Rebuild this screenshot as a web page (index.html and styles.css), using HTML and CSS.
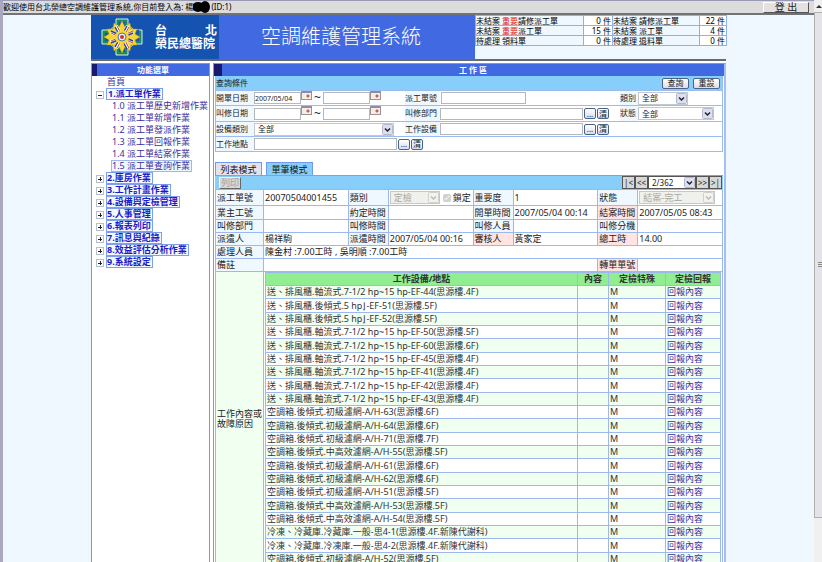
FILE: index.html
```html
<!DOCTYPE html>
<html lang="zh-Hant">
<head>
<meta charset="utf-8">
<title>空調維護管理系統</title>
<link rel="stylesheet" href="styles.css">
</head>
<body>
<div class="window">
  <div class="topbar">
    <p class="welcome">歡迎使用台北榮總空調維護管理系統,你目前登入為: 楊<svg class="redacted" width="18" height="12" viewBox="0 0 18 12" aria-hidden="true"><ellipse cx="5" cy="6" rx="6" ry="5"/><ellipse cx="12" cy="6" rx="5" ry="6"/></svg>(ID:1)</p>
    <button class="logout" type="button">登 出</button>
  </div>
  <div class="page">
    <header class="banner">
      <div class="brand">
        <svg class="emblem" viewBox="0 0 42 38" aria-hidden="true">
          <path d="M15 1h12v6l6 5h8v14h-8l-6 5v6H15v-6l-6-5H1V12h8l6-5z" fill="#1c8a5a" stroke="#d8efe0"/>
          <path d="M18 4h6v8h14v11H24v11h-6V23H4V15h14z" fill="#1553b0"/>
          <path d="M21 3l3 6 5-4 1 6 6 0-2 5 5 3-5 3 2 5-6 0-1 6-5-4-3 6-3-6-5 4-1-6-6 0 2-5-5-3 5-3-2-5 6 0 1-6 5 4z" fill="#f5d62c" stroke="#b99512" stroke-width=".5"/>
          <path d="M15 8l12 22M27 8L15 30M10 14l22 10M32 14L10 24" stroke="#fff" stroke-width="4"/>
          <path d="M14 9l12 22M26 8L14 29M10 13l22 10M32 15L10 25" stroke="#27409a" stroke-width="1.5"/>
          <path d="M16 8l12 22M28 9L16 30M10 15l22 10M32 13L10 23" stroke="#c23a3a" stroke-width="1"/>
          <circle cx="21" cy="19" r="7" fill="#f5d62c"/>
          <circle cx="21" cy="19" r="4" fill="#e8eef8" stroke="#4a78c0"/>
          <circle cx="21" cy="19" r="2" fill="#d83030"/>
        </svg>
        <div class="hospital"><span class="city"><span>台</span><span>北</span></span><span>榮民總醫院</span></div>
      </div>
      <h1>空調維護管理系統</h1>
      <div class="status">
        <table>
          <tr><th>未結案 <em>重要</em>請修派工單</th><td>0 件</td><th>未結案 請修派工單</th><td class="last">22 件</td></tr>
          <tr><th>未結案 <em>重要</em>派工單</th><td>15 件</td><th>未結案 派工單</th><td class="last">4 件</td></tr>
          <tr><th>待處理 領料單</th><td>0 件</td><th>待處理 退料單</th><td class="last">0 件</td></tr>
        </table>
      </div>
    </header>
    <div class="columns">
      <nav class="panel menu">
        <h2>功能選單</h2>
        <ul>
          <li><a href="#">首頁</a></li>
          <li class="group open"><a href="#">1.派工單作業</a>
            <ul>
              <li><a href="#">1.0 派工單歷史新增作業</a></li>
              <li><a href="#">1.1 派工單新增作業</a></li>
              <li><a href="#">1.2 派工單發派作業</a></li>
              <li><a href="#">1.3 派工單回報作業</a></li>
              <li><a href="#">1.4 派工單結案作業</a></li>
              <li><a class="current" href="#">1.5 派工單查詢作業</a></li>
            </ul>
          </li>
          <li class="group"><a href="#">2.庫房作業</a></li>
          <li class="group"><a href="#">3.工作計畫作業</a></li>
          <li class="group"><a href="#">4.設備與定檢管理</a></li>
          <li class="group"><a href="#">5.人事管理</a></li>
          <li class="group"><a href="#">6.報表列印</a></li>
          <li class="group"><a href="#">7.訊息與紀錄</a></li>
          <li class="group"><a href="#">8.效益評估分析作業</a></li>
          <li class="group"><a href="#">9.系統設定</a></li>
        </ul>
      </nav>
      <main class="panel work">
        <h2>工 作 區</h2>
        <form class="search">
          <div class="search-head"><span>查詢條件</span><button class="action" type="button">查詢</button><button class="action" type="button">重設</button></div>
          <div class="row">
            <label for="d1">開單日期</label>
            <div class="field"><input id="d1" class="date" value="2007/05/04"><button class="cal" type="button" aria-label="日曆"></button><span class="tilde">~</span><input class="date" aria-label="開單日期迄"><button class="cal" type="button" aria-label="日曆"></button></div>
            <label for="no">派工單號</label>
            <div class="field"><input id="no" class="short"></div>
            <label for="kind">類別</label>
            <div class="field"><select id="kind" class="small"><option>全部</option></select></div>
          </div>
          <div class="row">
            <label for="d2">叫修日期</label>
            <div class="field"><input id="d2" class="date"><button class="cal" type="button" aria-label="日曆"></button><span class="tilde">~</span><input class="date" aria-label="叫修日期迄"><button class="cal" type="button" aria-label="日曆"></button></div>
            <label for="dept">叫修部門</label>
            <div class="field"><input id="dept" class="long"><button class="mini" type="button">...</button><button class="mini" type="button">清</button></div>
            <label for="state">狀態</label>
            <div class="field"><select id="state" class="medium"><option>全部</option></select></div>
          </div>
          <div class="row">
            <label for="dev">設備類別</label>
            <div class="field"><select id="dev" class="wide"><option>全部</option></select></div>
            <label for="eq">工作設備</label>
            <div class="field"><input id="eq" class="long"><button class="mini" type="button">...</button><button class="mini" type="button">清</button></div>
          </div>
          <div class="row">
            <label for="place">工作地點</label>
            <div class="field place"><input id="place" class="long"><button class="mini" type="button">...</button><button class="mini" type="button">清</button></div>
          </div>
        </form>
        <div class="tabs"><button type="button">列表模式</button><button class="active" type="button">單筆模式</button></div>
        <div class="toolbar">
          <button class="print" type="button" disabled>列印</button>
          <div class="pager"><button type="button">|&lt;</button><button type="button">&lt;&lt;</button><select aria-label="頁次"><option>2/362</option></select><button type="button">&gt;&gt;</button><button type="button">&gt;|</button></div>
        </div>
        <table class="detail">
          <colgroup><col class="lab"><col><col class="lab2"><col><col class="lab2"><col><col class="lab2"><col></colgroup>
          <tr class="tall"><th>派工單號</th><td>20070504001455</td><th><label for="type">類別</label></th><td><div class="field"><select id="type" class="small" disabled><option>定檢</option></select><input id="lock" class="check" type="checkbox" checked disabled><label for="lock">鎖定</label></div></td><th>重要度</th><td>1</td><th><label for="st">狀態</label></th><td><select id="st" class="medium" disabled><option>結案-完工</option></select></td></tr>
          <tr><th>業主工號</th><td></td><th>約定時間</th><td></td><th>開單時間</th><td>2007/05/04 00:14</td><th class="pink">結案時間</th><td>2007/05/05 08:43</td></tr>
          <tr><th>叫修部門</th><td></td><th>叫修時間</th><td></td><th>叫修人員</th><td></td><th>叫修分機</th><td></td></tr>
          <tr><th>派遣人</th><td>楊祥駒</td><th>派遣時間</th><td>2007/05/04 00:16</td><th class="pink">審核人</th><td>黃家定</td><th class="pink">總工時</th><td>14.00</td></tr>
          <tr><th>處理人員</th><td colspan="7">陳金村 :7.00工時 , 吳明順 :7.00工時</td></tr>
          <tr><th>備註</th><td colspan="5"></td><th class="pink">轉單單號</th><td></td></tr>
          <tr><th class="reason">工作內容或故障原因</th><td class="holder" colspan="7">
            <table class="items">
              <colgroup><col><col class="c2"><col class="c3"><col class="c4"></colgroup>
              <thead><tr><th>工作設備/地點</th><th>內容</th><th>定檢特殊</th><th>定檢回報</th></tr></thead>
              <tbody>
              <tr><td>送、排風櫃.軸流式.7-1/2 hp~15 hp-EF-44(思源樓.4F)</td><td></td><td>M</td><td><a href="#">回報內容</a></td></tr>
              <tr><td>送、排風櫃.後傾式.5 hp⌋-EF-51(思源樓.5F)</td><td></td><td>M</td><td><a href="#">回報內容</a></td></tr>
              <tr><td>送、排風櫃.後傾式.5 hp⌋-EF-52(思源樓.5F)</td><td></td><td>M</td><td><a href="#">回報內容</a></td></tr>
              <tr><td>送、排風櫃.軸流式.7-1/2 hp~15 hp-EF-50(思源樓.5F)</td><td></td><td>M</td><td><a href="#">回報內容</a></td></tr>
              <tr><td>送、排風櫃.軸流式.7-1/2 hp~15 hp-EF-60(思源樓.6F)</td><td></td><td>M</td><td><a href="#">回報內容</a></td></tr>
              <tr><td>送、排風櫃.軸流式.7-1/2 hp~15 hp-EF-45(思源樓.4F)</td><td></td><td>M</td><td><a href="#">回報內容</a></td></tr>
              <tr><td>送、排風櫃.軸流式.7-1/2 hp~15 hp-EF-41(思源樓.4F)</td><td></td><td>M</td><td><a href="#">回報內容</a></td></tr>
              <tr><td>送、排風櫃.軸流式.7-1/2 hp~15 hp-EF-42(思源樓.4F)</td><td></td><td>M</td><td><a href="#">回報內容</a></td></tr>
              <tr><td>送、排風櫃.軸流式.7-1/2 hp~15 hp-EF-43(思源樓.4F)</td><td></td><td>M</td><td><a href="#">回報內容</a></td></tr>
              <tr><td>空調箱.後傾式.初級濾網-A/H-63(思源樓.6F)</td><td></td><td>M</td><td><a href="#">回報內容</a></td></tr>
              <tr><td>空調箱.後傾式.初級濾網-A/H-64(思源樓.6F)</td><td></td><td>M</td><td><a href="#">回報內容</a></td></tr>
              <tr><td>空調箱.後傾式.初級濾網-A/H-71(思源樓.7F)</td><td></td><td>M</td><td><a href="#">回報內容</a></td></tr>
              <tr><td>空調箱.後傾式.中高效濾網-A/H-55(思源樓.5F)</td><td></td><td>M</td><td><a href="#">回報內容</a></td></tr>
              <tr><td>空調箱.後傾式.初級濾網-A/H-61(思源樓.6F)</td><td></td><td>M</td><td><a href="#">回報內容</a></td></tr>
              <tr><td>空調箱.後傾式.初級濾網-A/H-62(思源樓.6F)</td><td></td><td>M</td><td><a href="#">回報內容</a></td></tr>
              <tr><td>空調箱.後傾式.初級濾網-A/H-51(思源樓.5F)</td><td></td><td>M</td><td><a href="#">回報內容</a></td></tr>
              <tr><td>空調箱.後傾式.中高效濾網-A/H-53(思源樓.5F)</td><td></td><td>M</td><td><a href="#">回報內容</a></td></tr>
              <tr><td>空調箱.後傾式.中高效濾網-A/H-54(思源樓.5F)</td><td></td><td>M</td><td><a href="#">回報內容</a></td></tr>
              <tr><td>冷凍、冷藏庫.冷藏庫.一般-思4-1(思源樓.4F.新陳代謝科)</td><td></td><td>M</td><td><a href="#">回報內容</a></td></tr>
              <tr><td>冷凍、冷藏庫.冷凍庫.一般-思4-2(思源樓.4F.新陳代謝科)</td><td></td><td>M</td><td><a href="#">回報內容</a></td></tr>
              <tr><td>空調箱.後傾式.初級濾網-A/H-52(思源樓.5F)</td><td></td><td>M</td><td><a href="#">回報內容</a></td></tr>
              </tbody>
            </table>
          </td></tr>
        </table>
      </main>
    </div>
  </div>
</div>
<div class="rail" aria-hidden="true"><svg width="8" height="12" viewBox="0 0 8 12"><path d="M2 8l3-3 3 3z" fill="#333"/></svg><div class="thumb"><i></i><i></i><i></i></div></div>
</body>
</html>
```

FILE: styles.css
```css
* { box-sizing: border-box; }

body {
  margin: 0;
  height: 100vh;
  overflow: hidden;
  display: flex;
  background: #f0f8ff;
  color: #222;
  font: 9px/10px "Noto Sans", "Noto Sans CJK TC", sans-serif;
}

button, input, select { font: inherit; color: inherit; margin: 0; padding: 0; border-radius: 0; }
h1, h2, p, ul { margin: 0; padding: 0; }
ul { list-style: none; }
a { color: #3a2f9c; text-decoration: none; }
table { border-collapse: collapse; border-spacing: 0; }
th { font-weight: 400; text-align: left; }

.window {
  flex: 1;
  min-width: 0;
  overflow: hidden;
  border-left: 3px solid #a8a8c0;
  border-top: 1px solid #9a9ab4;
}

.topbar {
  display: flex;
  justify-content: space-between;
  align-items: center;
  height: 14px;
  padding-right: 5px;
  background: #dcdcdc;
  border-bottom: 2px solid #707478;
}
.welcome { display: flex; align-items: center; font-size: 8px; line-height: 12px; color: #000; white-space: pre; }
.logout {
  width: 46px;
  height: 11px;
  border: 1px solid;
  border-color: #fff #555 #555 #fff;
  background: #e4e2e0;
  font-size: 10px;
  line-height: 9px;
}

.page { width: 100%; max-width: 635px; margin: 0 auto; }

.banner {
  display: flex;
  height: 46px;
  border-bottom: 2px solid #666c74;
  background: #4169e1;
}
.brand { display: flex; align-items: center; width: 128px; padding-left: 10px; gap: 12px; background: #1553b0; }
.emblem { width: 42px; height: 40px; }
.hospital { display: flex; flex-direction: column; width: 62px; color: #fff; font-size: 12px; line-height: 13px; font-weight: 700; white-space: nowrap; }
.city { display: flex; justify-content: space-between; }
.banner h1 { flex: 1; padding-left: 42px; color: #fff; font-size: 20px; line-height: 44px; font-weight: 300; white-space: nowrap; }
.status { width: 251px; background: #f0f8ff; color: #000; font-size: 8px; line-height: 8px; }
.status table { width: 100%; table-layout: fixed; }
.status th, .status td { height: 10px; padding: 0; border: 1px solid #8fb0ee; white-space: nowrap; }
.status th { width: 108px; }
.status th ~ th { width: 87px; }
.status td { width: 29px; padding-right: 1px; text-align: right; background: #fff; }
.status .last { width: 27px; }
.status em { font-style: normal; color: #e02020; }

.columns { display: flex; align-items: flex-start; gap: 3px; padding-top: 2px; background: #fff; }
.panel { background: #fff; border: 1px solid #6f9af0; }
.panel h2 {
  height: 12px;
  border-left: 5px solid #191970;
  background: #4169e1;
  color: #fff;
  font-size: 8px;
  line-height: 12px;
  font-weight: 700;
  text-align: center;
}

.menu { width: 119px; height: 100vh; }
.menu ul { padding: 0 0 0 14px; }
.menu li { line-height: 12px; white-space: nowrap; }
.menu li a { display: inline-block; height: 12px; line-height: 10px; padding: 0 1px; border: 1px solid transparent; vertical-align: top; }
.menu li > a:first-child:last-child { padding-left: 0; }
.menu li ul { padding: 0 0 0 5px; }
.menu .current { border-color: #9cb8ec; background: #f0f8ff; }
.group { position: relative; }
.menu .group > a { border-color: #7d9ff0; background: #f4f8ff; color: #1a1ac8; font-weight: 700; }
.group::before {
  content: "";
  position: absolute;
  left: -10px;
  top: 3px;
  width: 6px;
  height: 6px;
  border: 1px solid #b4c0cc;
  background: linear-gradient(#222, #222) center / 4px 1px no-repeat, linear-gradient(#222, #222) center / 1px 4px no-repeat, #fff;
}
.group.open::before { background: linear-gradient(#222, #222) center / 4px 1px no-repeat, #fff; }

.work { flex: 1; min-width: 0; padding: 0 1px; border-right: 2px solid #a4c0f0; }
.work h2 { margin: 0 -1px; border-left-width: 8px; }

.search { border: 1px solid #9cbcf0; border-top: 0; font-size: 8px; }
.search-head { display: flex; align-items: center; gap: 4px; height: 14px; padding-right: 2px; background: #87cefa; }
.search-head span { flex: 1; }
.action, .mini {
  border: 1px solid #4a6488;
  border-radius: 2px;
  background: linear-gradient(#fff, #dcdcec);
}
.action { width: 27px; height: 11px; line-height: 8px; }
.mini { width: 12px; height: 11px; margin-left: 1px; line-height: 8px; }
.row {
  display: grid;
  grid-template-columns: 38px 151px 35px 1fr 18px 84px;
  height: 15px;
  border-top: 1px solid #9cbcf0;
}
.row:nth-child(3) { height: 16px; }
.row > label { line-height: 14px; background: #f0f8ff; white-space: nowrap; }
.field { display: flex; align-items: center; white-space: nowrap; }
.place { grid-column: 2 / -1; }
.search input { height: 12px; border: 1px solid #b4b8bc; background: #fff; }
.search .date { width: 47px; }
.search .short { width: 85px; margin-left: 1px; }
.search .long { width: 143px; }
#d1 { font-size: 7px; }
.tilde { width: 11px; text-align: center; font-size: 12px; }
.cal {
  width: 11px;
  height: 9px;
  align-self: flex-start;
  border: 1px solid #a09090;
  border-top: 2px solid #8c8cac;
  background: radial-gradient(circle at 6px 3px, #c06060 1px, #f4eee8 2px);
}
select {
  appearance: none;
  height: 13px;
  padding-left: 3px;
  border: 1px solid #c0c8d0;
  background: #fff url("data:image/svg+xml,%3Csvg xmlns='http://www.w3.org/2000/svg' width='11' height='11'%3E%3Crect x='.5' y='.5' width='10' height='10' rx='1' fill='%23dcdff0' stroke='%23b4b8cc'/%3E%3Cpath d='M3 4.5l2.500 2.500L8 4.500' fill='none' stroke='%23222' stroke-width='1.500'/%3E%3C/svg%3E") right center no-repeat;
}
select:disabled {
  color: #a8a8a0;
  opacity: 1;
  background: #f0f0ec url("data:image/svg+xml,%3Csvg xmlns='http://www.w3.org/2000/svg' width='11' height='11'%3E%3Crect x='.5' y='.5' width='10' height='10' rx='1' fill='%23f2f2ee' stroke='%23d0d0c8'/%3E%3Cpath d='M3 4.500l2.500 2.500L8 4.500' fill='none' stroke='%23bbbbb0' stroke-width='1.500'/%3E%3C/svg%3E") right center no-repeat;
}
.small { width: 50px; }
.medium { width: 76px; }
.wide { width: 140px; }

.tabs { display: flex; gap: 4px; margin-top: 10px; height: 13px; }
.tabs button { width: 47px; border: 1px solid #6f9af0; border-bottom: 0; background: #e4e2ec; line-height: 11px; color: #111; }
.tabs .active { background: #87cefa; }
.toolbar { display: flex; justify-content: space-between; align-items: center; height: 14px; padding: 0 1px 0 4px; background: #87cefa; border-top: 1px solid #6fa8ee; }
.print { width: 22px; height: 12px; border: 1px solid; border-color: #f4f4f4 #666 #666 #f4f4f4; background: #d8d8d8; color: #a0a0a0; line-height: 9px; }
.pager { display: flex; }
.pager button { width: 13px; height: 13px; border: 1px solid #555; background: #d8d8d8; font-size: 8px; line-height: 10px; }
.pager select { width: 48px; border-color: #555; font-size: 8px; }

.detail { width: 100%; table-layout: fixed; }
.detail .lab { width: 48px; }
.detail .lab2 { width: 40px; }
.detail th, .detail td { height: 13px; padding: 0 1px; border: 1px solid #9cb8ec; white-space: nowrap; }
.detail th { background: #f0f8ff; }
.detail .pink { background: #ffe4e1; }
.detail .tall > * { height: 16px; }
.detail tr:nth-child(2) > td { height: 14px; }
.detail .tall select { display: block; }
.check { width: 8px; height: 8px; margin: 0 2px 0 3px; }
.detail .reason { background: #f0fff0; white-space: normal; }
.detail .holder { padding: 0 1px; vertical-align: top; }

.items { width: 100%; table-layout: fixed; color: #333; }
.items .c2 { width: 31px; }
.items .c3 { width: 57px; }
.items .c4 { width: 55px; }
.detail .items th { height: 13px; background: #90ee90; font-weight: 700; text-align: center; }
.detail .items td { height: 13px; }
.detail .items tbody tr:nth-child(3n+2) td { height: 14px; }
.items tbody tr:nth-child(odd) { background: #f0fff0; }

.rail { display: flex; flex-direction: column; width: 8px; background: #f0f0f0; }
.thumb { display: flex; flex-direction: column; justify-content: center; align-items: flex-end; gap: 1px; height: 90%; border: 1px solid #b0b0b0; border-right: 0; background: #e4e4e8; }
.thumb i { width: 4px; height: 1px; background: #888; }
```
